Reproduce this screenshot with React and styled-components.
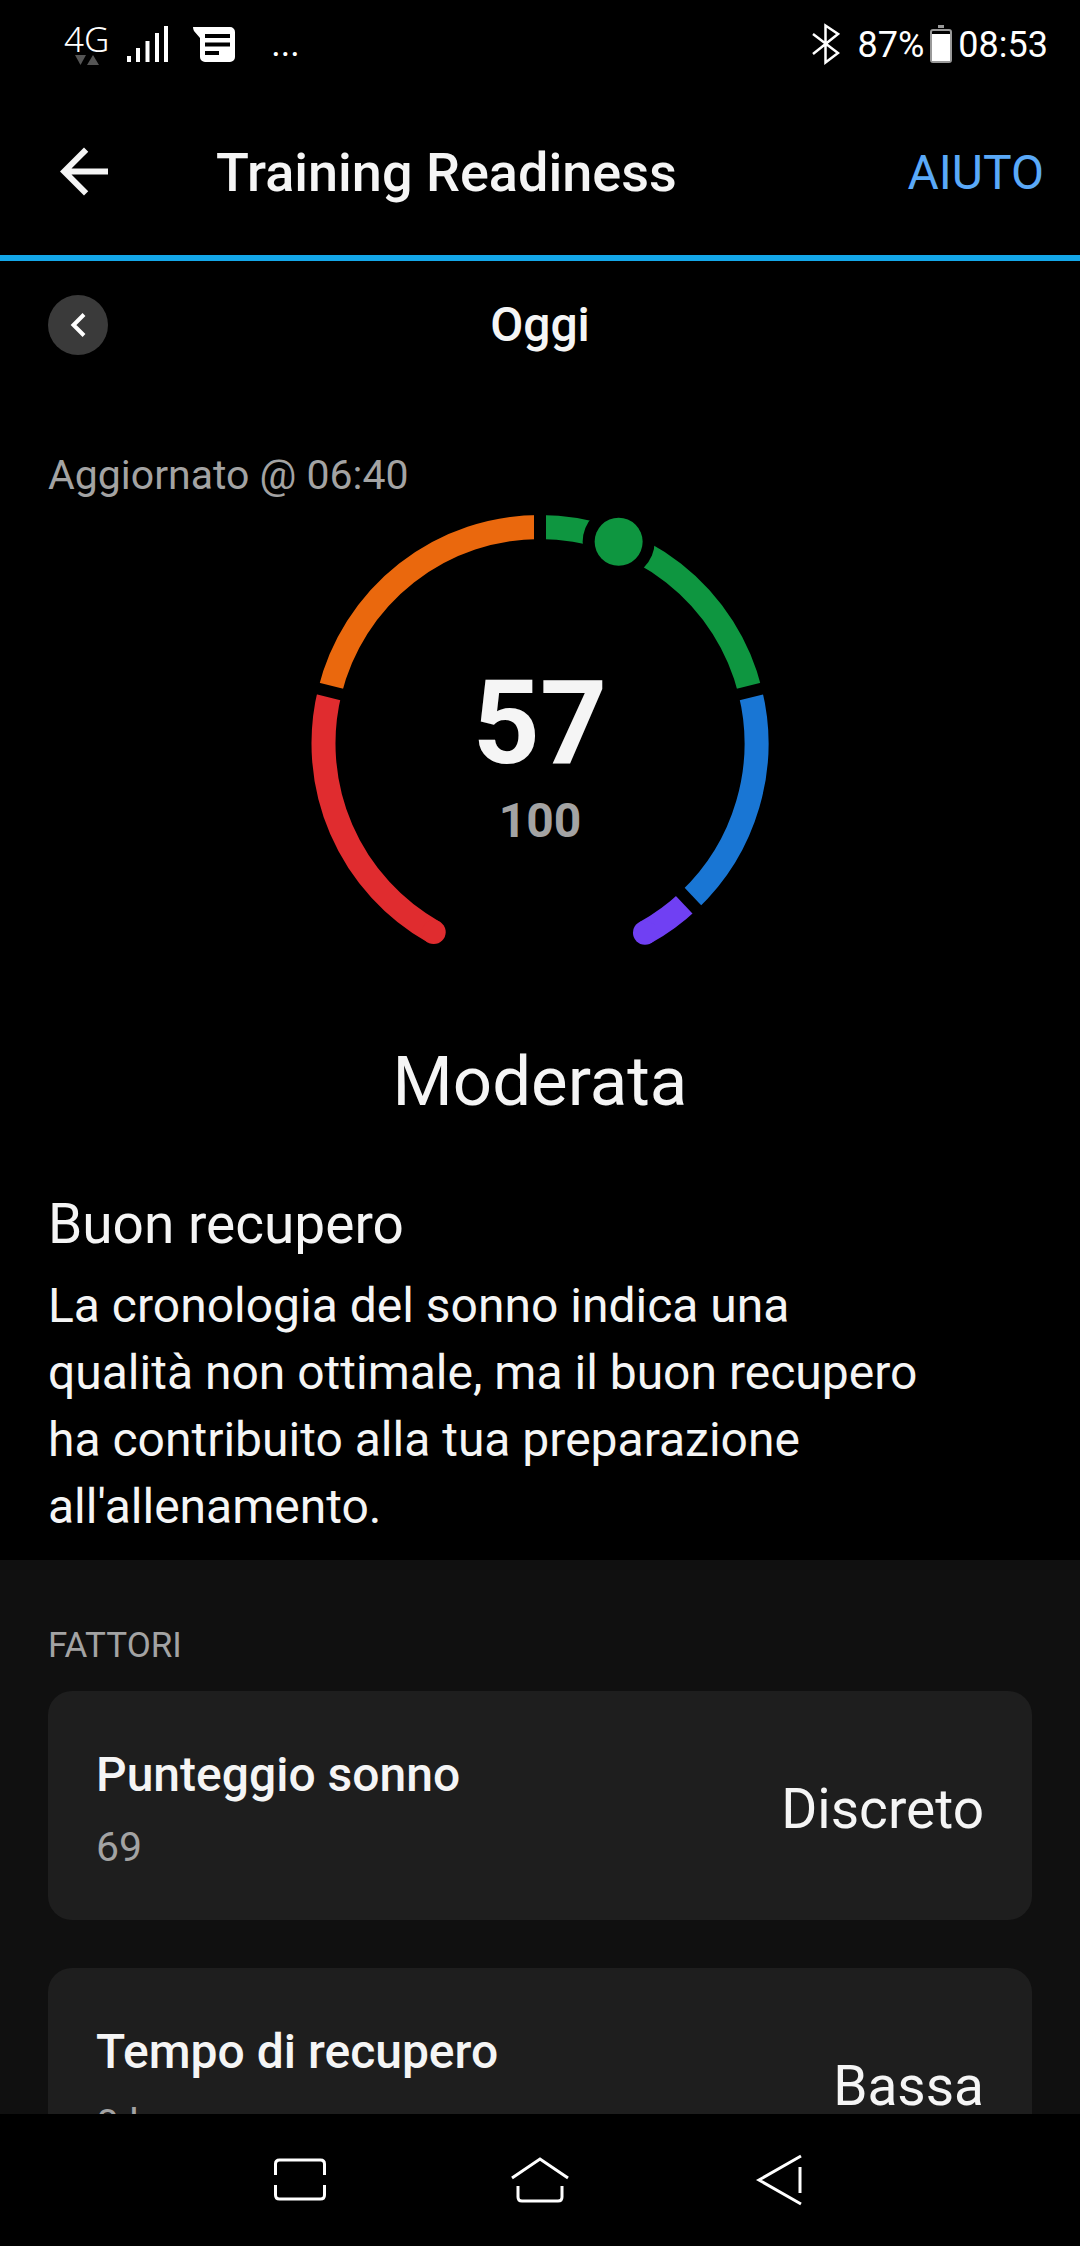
import styled, { createGlobalStyle } from "styled-components";

const GlobalStyle = createGlobalStyle`
  * {
    box-sizing: border-box;
  }

  body {
    margin: 0;
    background: #000;
    color: #f5f5f5;
    font-family: Roboto, "Noto Sans", sans-serif;
  }

  h1, h2, h3, p {
    margin: 0;
    font-weight: 400;
  }

  svg {
    display: block;
    flex-shrink: 0;
  }
`;

const Screen = styled.div`
  height: 100vh;
  display: flex;
  flex-direction: column;
  overflow: hidden;
`;

const StatusBar = styled.div`
  height: 90px;
  flex-shrink: 0;
  padding: 0 32px 2px 64px;
  display: flex;
  align-items: center;
  justify-content: space-between;
  color: #fff;
  font-size: 36px;
  line-height: 44px;
`;

const StatusGroup = styled.div`
  display: flex;
  align-items: center;
  gap: ${({ $gap }) => $gap}px;
`;

const StatusText = styled.span`
  padding-top: 2px;
`;

const Network = styled.div`
  display: flex;
  flex-direction: column;
  align-items: center;
  font-family: "Noto Sans", sans-serif;
  font-size: 35px;
  font-weight: 300;
  line-height: 32px;
`;

const Overflow = styled.span`
  padding-left: 16px;
`;

const AppBar = styled.header`
  height: 171px;
  flex-shrink: 0;
  padding: 0 36px 0 48px;
  display: flex;
  align-items: center;
  border-bottom: 6px solid #14a7e9;
`;

const IconButton = styled.button`
  padding: 0;
  border: 0;
  background: none;
  color: inherit;
  cursor: pointer;
`;

const AppTitle = styled.h1`
  flex: 1;
  padding-left: 96px;
  font-size: 54px;
  font-weight: 500;
  line-height: 64px;
`;

const HelpLink = styled.a`
  color: #5aa9f8;
  font-size: 48px;
  line-height: 64px;
  text-decoration: none;
`;

const Main = styled.main`
  flex: 1;
  min-height: 0;
  overflow: hidden;
`;

const DayPicker = styled.div`
  height: 128px;
  padding: 0 48px;
  display: grid;
  grid-template-columns: 60px 1fr 60px;
  align-items: center;
`;

const PrevButton = styled(IconButton)`
  width: 60px;
  height: 60px;
  border-radius: 50%;
  background: #3a3a3a;
  color: #fff;
`;

const Day = styled.h2`
  font-size: 48px;
  font-weight: 500;
  line-height: 64px;
  text-align: center;
`;

const Readiness = styled.section`
  padding: 56px 48px 20px;
`;

const Updated = styled.p`
  color: #a3a3a3;
  font-size: 41px;
  line-height: 60px;
`;

const Gauge = styled.div`
  margin-top: 10px;
  display: grid;
  justify-items: center;

  > * {
    grid-area: 1 / 1;
  }
`;

const Score = styled.div`
  padding-top: 148px;
  display: flex;
  flex-direction: column;
  gap: 8px;
  font-weight: 700;
  text-align: center;
`;

const ScoreValue = styled.div`
  font-size: 117px;
  line-height: 120px;
`;

const ScoreMax = styled.div`
  color: #a3a3a3;
  font-size: 48px;
  line-height: 60px;
`;

const Level = styled.p`
  margin-top: 97px;
  font-size: 69px;
  line-height: 80px;
  text-align: center;
`;

const FeedbackTitle = styled.h3`
  margin-top: 69px;
  font-size: 55px;
  line-height: 66px;
`;

const FeedbackText = styled.p`
  margin: 15px 96px 0 0;
  font-size: 48px;
  line-height: 67px;
`;

const Factors = styled.section`
  padding: 64px 48px 48px;
  background: #101010;
`;

const FactorsTitle = styled.h3`
  margin-bottom: 23px;
  color: #a3a3a3;
  font-size: 35px;
  line-height: 44px;
`;

const FactorList = styled.div`
  display: flex;
  flex-direction: column;
  gap: 48px;
`;

const FactorCard = styled.div`
  padding: 50px 48px 43px;
  display: flex;
  align-items: center;
  justify-content: space-between;
  background: #1e1e1e;
  border-radius: 24px;
`;

const FactorName = styled.div`
  font-size: 48px;
  font-weight: 500;
  line-height: 68px;
`;

const FactorDetail = styled.div`
  margin-top: 8px;
  color: #a3a3a3;
  font-size: 41px;
  line-height: 60px;
`;

const FactorValue = styled.div`
  font-size: 55px;
  line-height: 64px;
`;

const NavBar = styled.nav`
  height: 132px;
  flex-shrink: 0;
  display: flex;
  align-items: center;
  justify-content: center;
  gap: 168px;
  background: #000;
  color: #fff;
`;

const CENTER_X = 230;
const CENTER_Y = 228.5;
const RADIUS = 216.5;

// angles are clockwise degrees from the top of the dial
const zones = [
  { color: "#e02c2f", from: -150.6, to: -76.1, cap: -150.6 },
  { color: "#ea680d", from: -76.1, to: 0 },
  { color: "#0e9640", from: 0, to: 76.1 },
  { color: "#1976d4", from: 76.1, to: 136.6 },
  { color: "#7040f3", from: 136.6, to: 151, cap: 151 },
];

const factors = [
  { name: "Punteggio sonno", detail: "69", value: "Discreto" },
  { name: "Tempo di recupero", detail: "0 h", value: "Bassa" },
];

function point(angle, radius = RADIUS) {
  const rad = (angle * Math.PI) / 180;
  return [CENTER_X + radius * Math.sin(rad), CENTER_Y - radius * Math.cos(rad)];
}

function arc(from, to) {
  return `M${point(from).join(" ")} A${RADIUS} ${RADIUS} 0 0 1 ${point(to).join(" ")}`;
}

function Dial() {
  const [markerX, markerY] = point(21.3);

  return (
    <svg width="460" height="430" viewBox="0 0 460 430" fill="none" aria-hidden="true">
      {zones.map(({ color, from, to, cap }) => (
        <g key={color}>
          <path d={arc(from, to)} stroke={color} strokeWidth="24" />
          {cap && <circle cx={point(cap)[0]} cy={point(cap)[1]} r="12" fill={color} />}
        </g>
      ))}
      {zones.slice(1).map(({ color, from }) => (
        <path
          key={color}
          d={`M${point(from, 200).join(" ")} L${point(from, 232).join(" ")}`}
          stroke="#000"
          strokeWidth="12"
        />
      ))}
      <circle cx={markerX} cy={markerY} r="36" fill="#000" />
      <circle cx={markerX} cy={markerY} r="24" fill="#0e9640" />
    </svg>
  );
}

function DataArrows() {
  return (
    <svg width="24" height="10" viewBox="0 0 24 10" fill="#555">
      <path d="M0 0h11L5.500 10z" />
      <path d="M12 10h12L18 0z" />
    </svg>
  );
}

function Signal() {
  return (
    <svg width="42" height="38" viewBox="0 0 42 38" fill="#fff">
      <path d="M0 31h4v6H0zM9 23h4v14H9zM18.500 16h4v21h-4zM28 8h4v29h-4zM37 1h4v36h-4z" />
    </svg>
  );
}

function Message() {
  return (
    <svg width="42" height="35" viewBox="0 0 42 35">
      <path d="M0 0h37a5 5 0 0 1 5 5v25a5 5 0 0 1-5 5H12a5 5 0 0 1-5-5V11L1 4Q0 2 0 0z" fill="#fff" />
      <path d="M14 9h21M14 17.500h21M14 26h10" stroke="#000" strokeWidth="4" strokeLinecap="square" />
    </svg>
  );
}

function Bluetooth() {
  return (
    <svg width="28" height="42" viewBox="0 0 28 42" fill="none" stroke="#fff" strokeWidth="2.500">
      <path d="M1 11l25 19-12.500 9.500V2.500L26 11 1 31" />
    </svg>
  );
}

function Battery() {
  return (
    <svg width="22" height="38" viewBox="0 0 22 38">
      <path d="M8 0h6v3H8z" fill="#999" />
      <rect x="1" y="5" width="20" height="32" rx="2" fill="#000" stroke="#999" strokeWidth="2" />
      <path d="M2 9h18v27H2z" fill="#fff" />
    </svg>
  );
}

export default function App() {
  return (
    <>
      <GlobalStyle />
      <Screen>
        <StatusBar>
          <StatusGroup $gap={24}>
            <StatusGroup $gap={18}>
              <Network>
                4G
                <DataArrows />
              </Network>
              <Signal />
            </StatusGroup>
            <StatusGroup $gap={20}>
              <Message />
              <Overflow>...</Overflow>
            </StatusGroup>
          </StatusGroup>
          <StatusGroup $gap={6}>
            <StatusGroup $gap={18}>
              <Bluetooth />
              <StatusText>87%</StatusText>
            </StatusGroup>
            <Battery />
            <StatusText>08:53</StatusText>
          </StatusGroup>
        </StatusBar>

        <AppBar>
          <IconButton aria-label="Indietro">
            <svg width="72" height="72" viewBox="0 0.500 24 24" fill="currentColor">
              <path d="M20 11H7.830l5.590-5.590L12 4l-8 8 8 8 1.410-1.410L7.830 13H20v-2z" />
            </svg>
          </IconButton>
          <AppTitle>Training Readiness</AppTitle>
          <HelpLink href="#aiuto">AIUTO</HelpLink>
        </AppBar>

        <Main>
          <DayPicker>
            <PrevButton aria-label="Giorno precedente">
              <svg width="60" height="60" viewBox="0 0 60 60" fill="none" stroke="currentColor" strokeWidth="4">
                <path d="M36 19.500L25.500 30 36 40.500" />
              </svg>
            </PrevButton>
            <Day>Oggi</Day>
          </DayPicker>

          <Readiness>
            <Updated>Aggiornato @ 06:40</Updated>
            <Gauge>
              <Dial />
              <Score>
                <ScoreValue>57</ScoreValue>
                <ScoreMax>100</ScoreMax>
              </Score>
            </Gauge>
            <Level>Moderata</Level>
            <FeedbackTitle>Buon recupero</FeedbackTitle>
            <FeedbackText>
              La cronologia del sonno indica una qualità non ottimale, ma il buon recupero ha contribuito alla tua
              preparazione all'allenamento.
            </FeedbackText>
          </Readiness>

          <Factors>
            <FactorsTitle>FATTORI</FactorsTitle>
            <FactorList>
              {factors.map(({ name, detail, value }) => (
                <FactorCard key={name}>
                  <div>
                    <FactorName>{name}</FactorName>
                    <FactorDetail>{detail}</FactorDetail>
                  </div>
                  <FactorValue>{value}</FactorValue>
                </FactorCard>
              ))}
            </FactorList>
          </Factors>
        </Main>

        <NavBar>
          <IconButton aria-label="App recenti">
            <svg width="72" height="72" viewBox="0 0 72 72" fill="none" stroke="currentColor" strokeWidth="3">
              <path d="M11.500 31V20q0-4 4-4h41q4 0 4 4v11M11.500 41v10q0 4 4 4h41q4 0 4-4V41" />
            </svg>
          </IconButton>
          <IconButton aria-label="Home">
            <svg width="72" height="72" viewBox="0 0 72 72" fill="none" stroke="currentColor" strokeWidth="3">
              <path d="M8 34l28-19 28 19M14 42v11q0 4 4 4h36q4 0 4-4V42" />
            </svg>
          </IconButton>
          <IconButton aria-label="Torna indietro">
            <svg width="72" height="72" viewBox="0 0 72 72" fill="none" stroke="currentColor" strokeWidth="3">
              <path d="M57 12L15 36l42 24M56 23v26" />
            </svg>
          </IconButton>
        </NavBar>
      </Screen>
    </>
  );
}
